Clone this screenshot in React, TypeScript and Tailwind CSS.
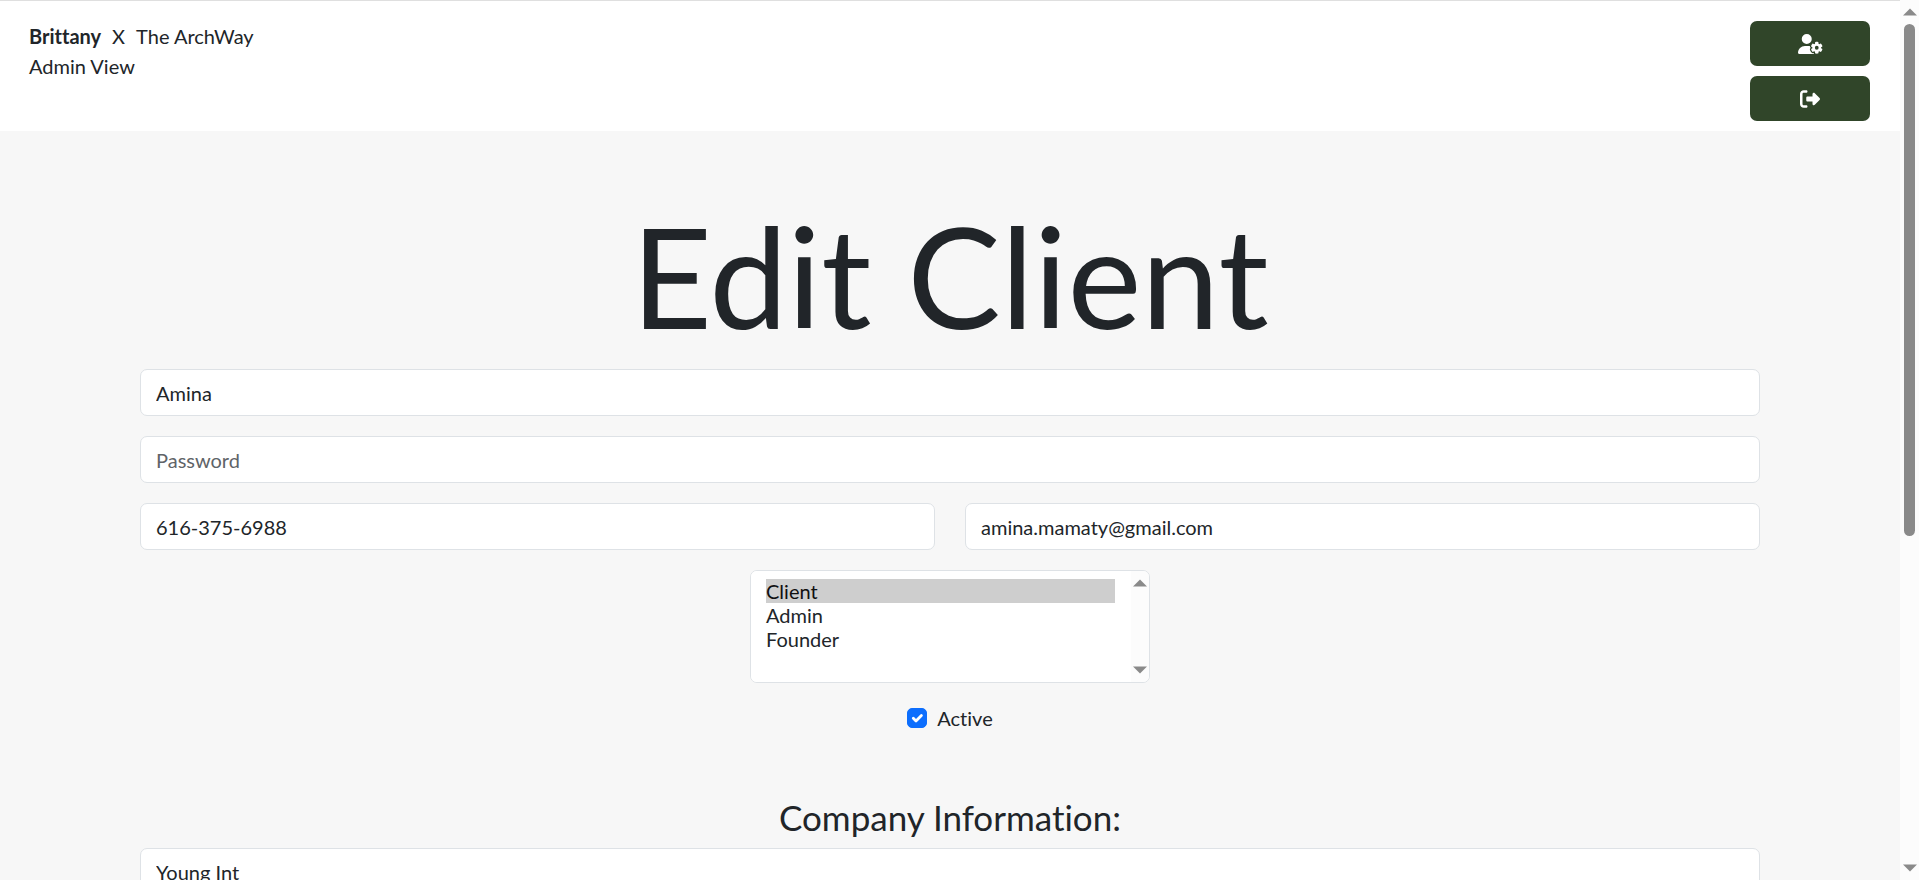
import { useState } from "react";
import { FaRightFromBracket, FaUserGear } from "react-icons/fa6";

const fieldClass =
  "block h-[47px] w-full min-w-0 rounded-[7px] border border-[#dee2e6] bg-white px-[15px] text-[20px] leading-[30px] text-[#212529] outline-none placeholder:text-[#5f6468] placeholder:opacity-100";

type FieldProps = {
  label: string;
  name: string;
  type?: string;
  value?: string;
};

function Field({ label, name, type = "text", value = "" }: FieldProps) {
  return (
    <input
      className={fieldClass}
      aria-label={label}
      placeholder={label}
      name={name}
      type={type}
      defaultValue={value}
    />
  );
}

function Arrow({ down = false }: { down?: boolean }) {
  return (
    <svg viewBox="0 0 14 8" className="h-2 w-3.5 shrink-0 fill-[#8a8a8a]" aria-hidden="true">
      <path d={down ? "M0 0.5h14L7 7.5z" : "M0 7.5h14L7 0.5z"} />
    </svg>
  );
}

function Header() {
  const buttonClass =
    "flex h-[45px] w-[120px] items-center justify-center rounded-[7px] bg-[#304529] text-white";
  return (
    <header className="flex items-start justify-between border-t border-[#dfdfdf] bg-white pt-5 pr-[30px] pb-2.5 pl-[29px]">
      <div className="leading-[30px]">
        <p className="flex gap-[11px]">
          <b>Brittany</b>
          <span>X</span>
          <span>The ArchWay</span>
        </p>
        <p>Admin View</p>
      </div>
      <nav className="flex flex-col gap-2.5">
        <button type="button" className={buttonClass} aria-label="Account settings">
          <FaUserGear className="h-5 w-[25px]" />
        </button>
        <button type="button" className={buttonClass} aria-label="Log out">
          <FaRightFromBracket className="size-5" />
        </button>
      </nav>
    </header>
  );
}

function RoleSelect() {
  const [roles, setRoles] = useState(["Client"]);
  return (
    <div className="flex h-[113px] w-[400px] overflow-hidden rounded-[7px] border border-[#dee2e6] bg-white">
      <select
        multiple
        size={4}
        aria-label="Role"
        value={roles}
        onChange={(e) => setRoles(Array.from(e.target.selectedOptions, (o) => o.value))}
        className="min-w-0 flex-1 appearance-none overflow-hidden bg-white py-2 pr-4 pl-[15px] text-[20px] text-[#212529] outline-none"
      >
        <option className="h-6 p-0 leading-6">Client</option>
        <option className="h-6 p-0 leading-6">Admin</option>
        <option className="h-6 p-0 leading-6">Founder</option>
      </select>
      <div className="flex w-[18px] flex-col items-center justify-between bg-[#fcfcfc] py-2">
        <Arrow />
        <Arrow down />
      </div>
    </div>
  );
}

function ActiveCheck() {
  return (
    <label className="flex h-[30px] items-center gap-2.5">
      <span className="grid size-5 *:[grid-area:1/1]">
        <input
          type="checkbox"
          name="active"
          defaultChecked
          className="peer size-5 appearance-none rounded-[5px] border border-[#dee2e6] bg-white checked:border-[#0d6efd] checked:bg-[#0d6efd]"
        />
        <svg
          viewBox="0 0 20 20"
          className="pointer-events-none hidden size-5 peer-checked:block"
          fill="none"
          stroke="#fff"
          strokeWidth="2.8"
          strokeLinecap="round"
          strokeLinejoin="round"
          aria-hidden="true"
        >
          <path d="M6.3 10.2l2.7 2.7 5.4-5.4" />
        </svg>
      </span>
      Active
    </label>
  );
}

export default function App() {
  return (
    <div className="flex h-screen overflow-hidden bg-[#f7f7f7] font-['Lato',sans-serif] text-[20px] text-[#212529] [font-variant-ligatures:none]">
      <div className="min-w-0 flex-1 overflow-hidden">
        <Header />
        <main className="px-[140px] pt-[60px]">
          <h1 className="pb-2.5 text-center text-[140px] leading-[168px]">Edit Client</h1>
          <form className="flex flex-col gap-5">
            <Field label="Name" name="name" value="Amina" />
            <Field label="Password" name="password" type="password" />
            <div className="grid grid-cols-2 gap-[30px]">
              <Field label="Phone" name="phone" value="616-375-6988" />
              <Field label="Email" name="email" type="email" value="amina.mamaty@gmail.com" />
            </div>
            <div className="flex flex-col items-center gap-5">
              <RoleSelect />
              <ActiveCheck />
            </div>
            <section className="pt-[43px]">
              <h2 className="pb-2.5 text-center text-[35px] leading-[42px]">Company Information:</h2>
              <Field label="Company name" name="company" value="Young Int" />
            </section>
          </form>
        </main>
      </div>
      <div className="flex w-[19px] shrink-0 flex-col items-center gap-2 bg-[#fcfcfc] py-2" aria-hidden="true">
        <Arrow />
        <div className="min-h-0 w-full flex-1 px-1">
          <div className="h-[61.5%] rounded-full bg-[#8a8a8a]" />
        </div>
        <Arrow down />
      </div>
    </div>
  );
}
